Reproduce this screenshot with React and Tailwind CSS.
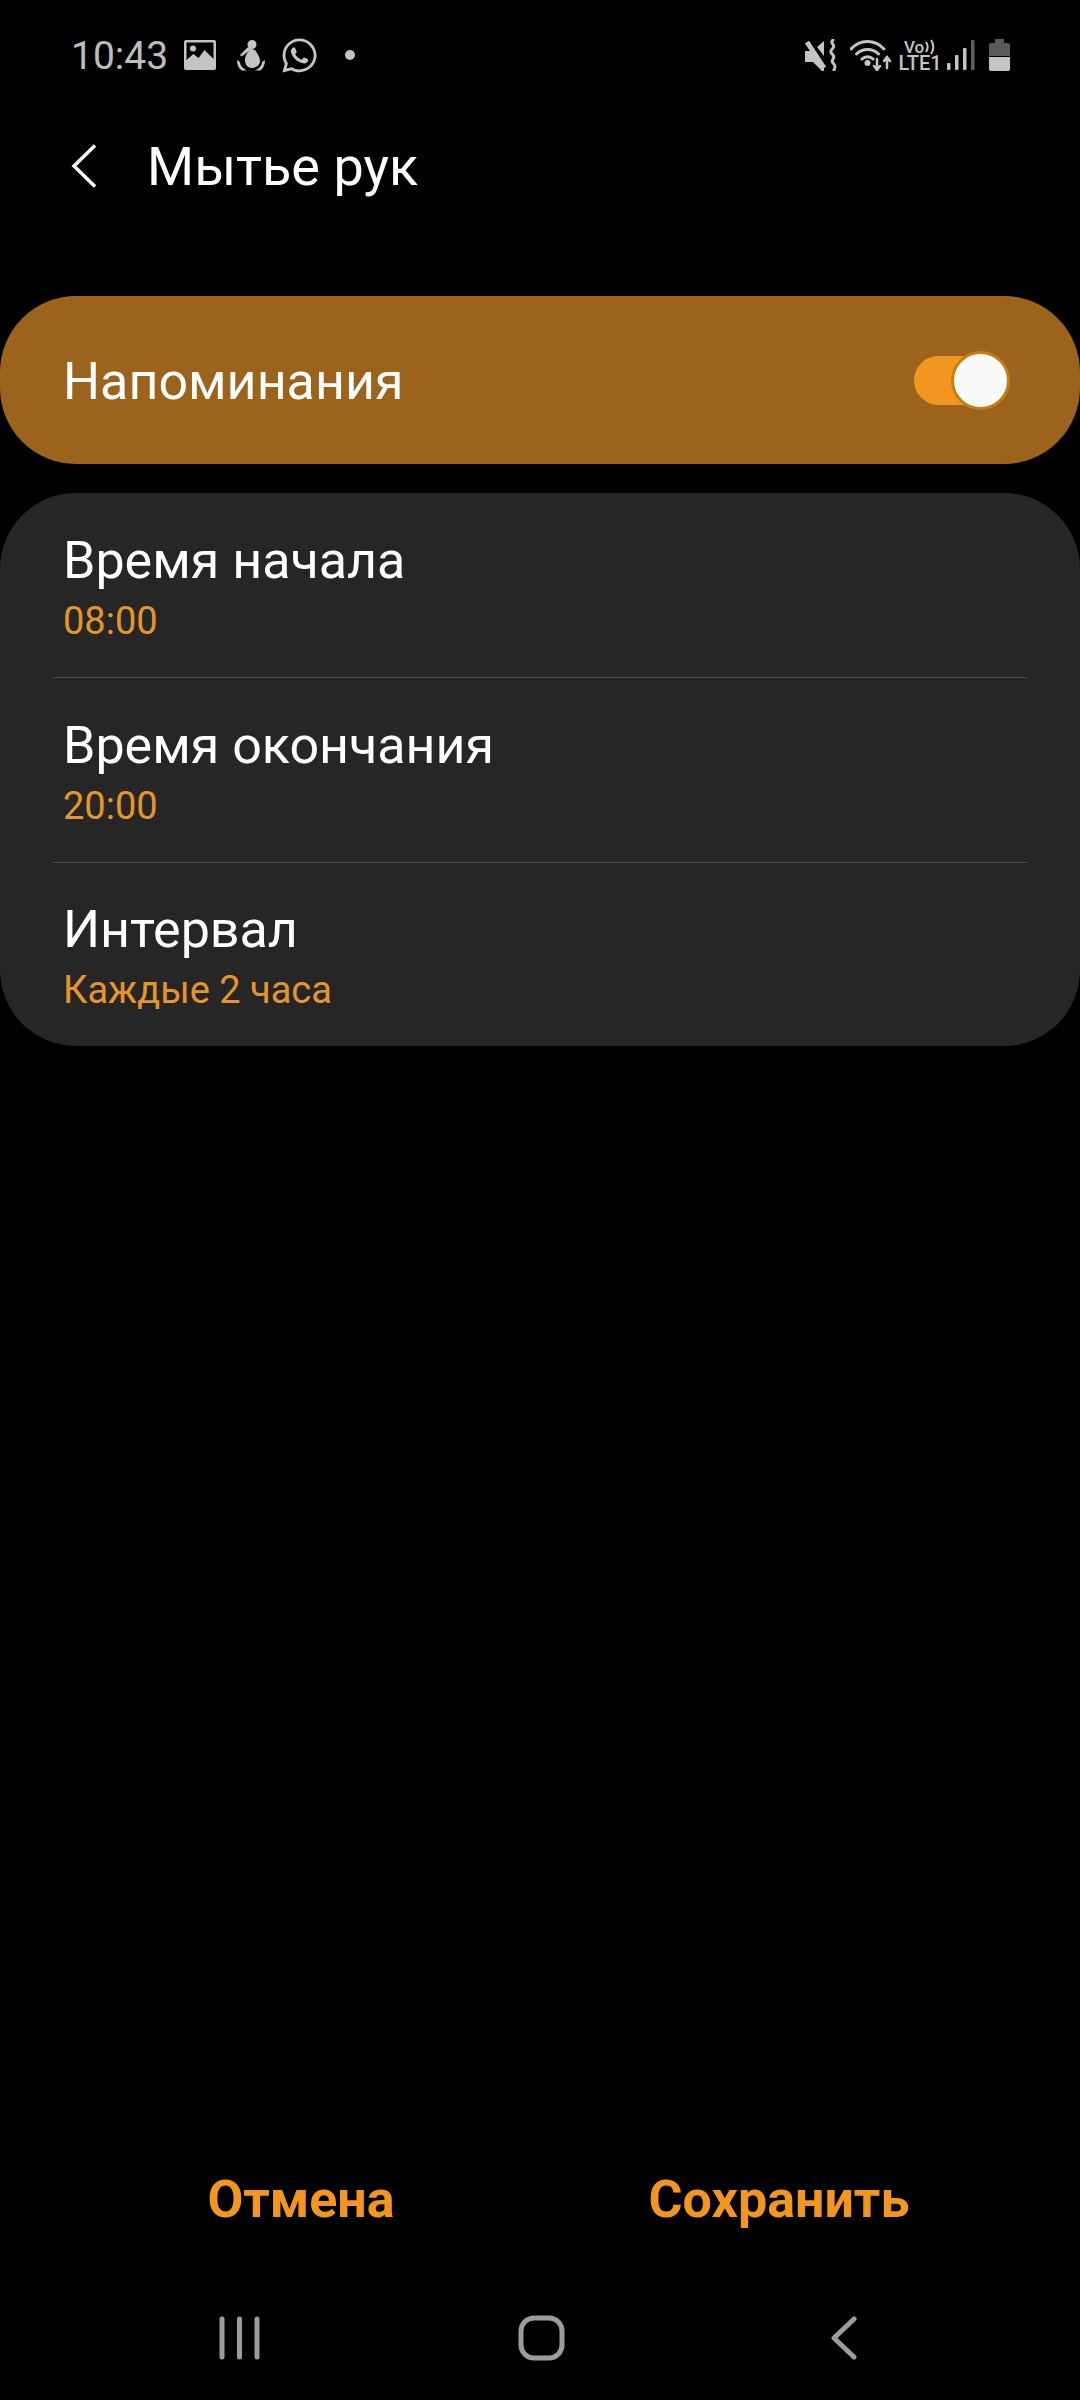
import { FaWhatsapp } from 'react-icons/fa';

const rows = [
  { title: 'Время начала', value: '08:00' },
  { title: 'Время окончания', value: '20:00' },
  { title: 'Интервал', value: 'Каждые 2 часа' },
];

function ImageIcon() {
  return (
    <svg width="32" height="30" viewBox="0 0 32 30" className="ml-[18px]">
      <path fillRule="evenodd" fill="#c4c4c4" d="M2 0h28a2 2 0 0 1 2 2v26a2 2 0 0 1-2 2H2a2 2 0 0 1-2-2V2a2 2 0 0 1 2-2zM2.500 2.500v17.500l7-6 5 4 6-8 9 9V2.500z" />
      <circle cx="9" cy="8.500" r="3" fill="#c4c4c4" />
    </svg>
  );
}

function FigureIcon() {
  return (
    <svg width="28" height="31" viewBox="0 0 28 31" className="ml-[21px]" fill="#c4c4c4">
      <circle cx="15" cy="4.500" r="4.500" />
      <path d="M11 7 3 15l1.500 1.500L12 11c-2.500 3-4 5-4 9 0 5 3 8 7 8s8-3 8-7c0-4-3-8-4.500-10.500z" />
      <path d="M0 20l3 2c0 3 2 6 7 8.500H5C2 29 0 25 0 20zM28 20c0 5-2 9-5 10.500h-5c5-2.500 7-5.500 7-8.500z" />
    </svg>
  );
}

function MuteIcon() {
  return (
    <svg width="34" height="32" viewBox="0 0 34 32">
      <path fill="#c4c4c4" d="M0 12h6l13 15v5h-2L8 23H0zM12 8l7-6v15z" />
      <path stroke="#c4c4c4" strokeWidth="5" d="M2 3l17 26" />
      <path fill="none" stroke="#c4c4c4" strokeWidth="3" strokeLinecap="round" d="M28 1c-4 3 3 5 0 8s-3 4 0 7-3 5 0 8 2 4 1 7" />
    </svg>
  );
}

function WifiIcon() {
  return (
    <svg width="42" height="32" viewBox="0 0 42 32" className="ml-[11px]" fill="none" stroke="#c4c4c4" strokeWidth="3" strokeLinecap="round">
      <path d="M1 10c9-10 24-10 33 0M6.500 15c6-6 16-6 22 0M12 20c3-3 8-3 11 0" />
      <circle cx="17.500" cy="24" r="1.500" fill="#c4c4c4" />
      <path strokeWidth="2.500" d="M27 20v11M24 27l3 4 3-4M37 29V18M34 22l3-4 3 4" />
    </svg>
  );
}

function VoLte() {
  return (
    <div className="ml-[8px] flex w-[40px] flex-col items-center font-['Roboto',sans-serif] font-medium text-[#c4c4c4]">
      <div className="flex h-[16px] items-center text-[17px] leading-[16px]">
        <span>Vo</span>
        <svg width="12" height="16" viewBox="0 0 12 16" fill="none" stroke="#c4c4c4" strokeWidth="2">
          <path d="M2 3c2 3 2 7 0 10M7 1c3 4 3 10 0 14" />
        </svg>
      </div>
      <span className="text-[20px] leading-[16px]">LTE1</span>
    </div>
  );
}

function SignalIcon() {
  return (
    <svg width="28" height="30" viewBox="0 0 28 30" className="ml-[7px]">
      <rect x="0" y="23" width="3.500" height="7" rx="1" fill="#c4c4c4" />
      <rect x="8" y="15" width="3.500" height="15" rx="1" fill="#c4c4c4" />
      <rect x="16" y="8" width="3.500" height="22" rx="1" fill="#c4c4c4" />
      <rect x="24" y="0" width="3.500" height="30" rx="1" fill="#5f5f5f" />
    </svg>
  );
}

function BatteryIcon() {
  return (
    <svg width="21" height="32" viewBox="0 0 21 32" className="ml-[14px]">
      <path fill="#5a5a5a" d="M6 0h9v4h4a2 2 0 0 1 2 2v11H0V6a2 2 0 0 1 2-2h4z" />
      <path fill="#c4c4c4" d="M0 18h21v12a2 2 0 0 1-2 2H2a2 2 0 0 1-2-2z" />
    </svg>
  );
}

export default function App() {
  return (
    <div className="flex h-[2400px] w-[1080px] flex-col bg-black font-['Roboto',sans-serif] text-white">
      {/* status bar */}
      <div className="flex h-[110px] items-center pl-[71px] pr-[70px]">
        <span className="w-[95px] pt-[2px] text-[39px] leading-none text-[#bdbdbd]">10:43</span>
        <ImageIcon />
        <FigureIcon />
        <FaWhatsapp className="ml-[15px] text-[39px] text-[#c4c4c4]" />
        <div className="ml-[26px] h-[10px] w-[10px] rounded-full bg-[#c4c4c4]" />
        <div className="ml-auto flex items-center">
          <MuteIcon />
          <WifiIcon />
          <VoLte />
          <SignalIcon />
          <BatteryIcon />
        </div>
      </div>

      {/* header */}
      <div className="flex h-[112px] items-center pl-[71px]">
        <svg width="26" height="44" viewBox="0 0 26 44" fill="none" stroke="#fff" strokeWidth="3.500">
          <path d="M24 1.500 3 22l21 20.500" />
        </svg>
        <h1 className="ml-[50px] pt-[2px] text-[54px] font-normal leading-none">Мытье рук</h1>
      </div>

      {/* main switch */}
      <div className="mt-[74px] flex h-[168px] items-center justify-between rounded-[76px] bg-[#9b631b] pl-[63px] pr-[74px]">
        <span className="pt-[3px] text-[52px] leading-none">Напоминания</span>
        <div className="relative h-[49px] w-[92px] rounded-full bg-[#f3961f]">
          <div className="absolute right-[-4px] top-[-5px] h-[59px] w-[59px] rounded-full border-[3px] border-[#c47f17] bg-[#fafafa]" />
        </div>
      </div>

      {/* settings card */}
      <div className="mt-[29px] flex h-[553px] flex-col rounded-[76px] bg-[#262626]">
        {rows.map((row, i) => (
          <div key={row.title} className="flex flex-1 flex-col">
            {i > 0 && <div className="mx-[53px] h-[1px] bg-[#4d4d4d]" />}
            <div className="flex flex-1 flex-col justify-center pl-[63px] pt-[4px]">
              <span className="text-[52px] leading-[62px]">{row.title}</span>
              <span className="pt-[6px] text-[38px] leading-[46px] text-[#e5962b]">{row.value}</span>
            </div>
          </div>
        ))}
      </div>

      {/* buttons */}
      <div className="mb-[8px] mt-auto flex h-[136px] items-center px-[62px]">
        <button className="flex-1 text-[52px] font-bold leading-none text-[#f3961f]">Отмена</button>
        <button className="flex-1 text-[52px] font-bold leading-none text-[#f3961f]">Сохранить</button>
      </div>

      {/* nav bar */}
      <div className="flex h-[124px] items-center pl-[219px]">
        <svg width="41" height="44" viewBox="0 0 41 44" stroke="#9c9c9c" strokeWidth="5" strokeLinecap="round">
          <path d="M3 3v38M20.500 3v38M38 3v38" />
        </svg>
        <svg width="47" height="46" viewBox="0 0 47 46" fill="none" stroke="#9c9c9c" strokeWidth="5" className="ml-[258px]">
          <rect x="3" y="3" width="41" height="40" rx="13" />
        </svg>
        <svg width="26" height="44" viewBox="0 0 26 44" fill="none" stroke="#9c9c9c" strokeWidth="5" strokeLinecap="round" strokeLinejoin="round" className="ml-[266px]">
          <path d="M23 3 3 22l20 19" />
        </svg>
      </div>
    </div>
  );
}
